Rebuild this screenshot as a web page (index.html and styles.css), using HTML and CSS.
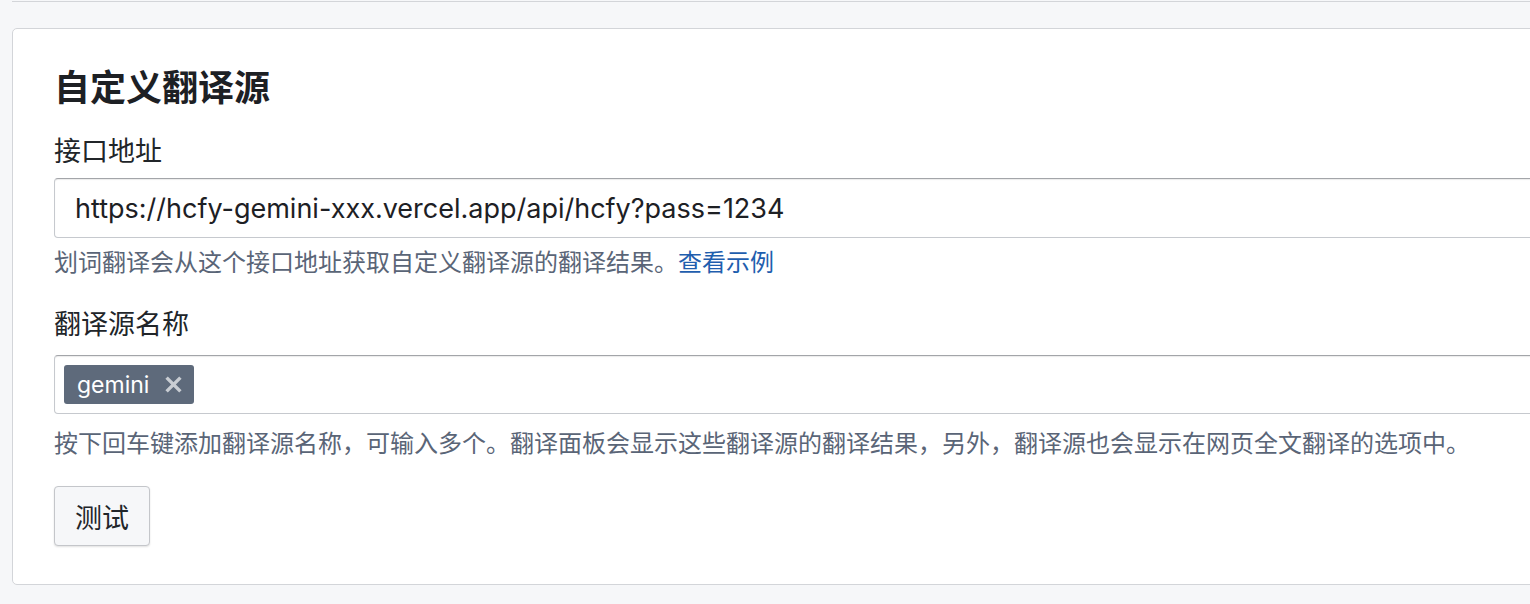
FILE: index.html
```html
<!DOCTYPE html>
<html lang="zh-CN">
<head>
<meta charset="utf-8">
<title>自定义翻译源</title>
<link rel="stylesheet" href="styles.css">
</head>
<body>
<div class="prev-card"></div>
<section class="card">
  <h2 class="title">自定义翻译源</h2>
  <div class="field">
    <label class="label">接口地址</label>
    <div class="input">https://hcfy-gemini-xxx.vercel.app/api/hcfy?pass=1234</div>
    <p class="help">划词翻译会从这个接口地址获取自定义翻译源的翻译结果。<a class="link" href="#">查看示例</a></p>
  </div>
  <div class="field field-2">
    <label class="label">翻译源名称</label>
    <div class="input tags">
      <span class="tag">gemini<svg class="tag-x" width="17" height="17" viewBox="0 0 17 17"><path d="M1.6 1.6 L15.4 15.4 M15.4 1.6 L1.6 15.4" stroke="currentColor" stroke-width="3.4" stroke-linecap="butt" fill="none"/></svg></span>
    </div>
    <p class="help help-2">按下回车键添加翻译源名称，可输入多个。翻译面板会显示这些翻译源的翻译结果，另外，翻译源也会显示在网页全文翻译的选项中。</p>
  </div>
  <button class="btn">测试</button>
</section>
</body>
</html>
```

FILE: styles.css
```css
html, body {
  margin: 0;
  padding: 0;
  overflow: hidden;
}
body {
  background: #f6f7f9;
  font-family: "Liberation Sans", "Noto Sans CJK SC", sans-serif;
  color: #212529;
  width: 1600px;
  height: 604px;
}
.prev-card {
  height: 1px;
  margin: 0 0 0 12px;
  border-bottom: 1px solid #d3d5d9;
}
.card {
  margin: 26px 0 0 12px;
  width: 1560px;
  background: #fff;
  border: 1px solid #d3d5d9;
  border-radius: 5px;
  padding: 38px 0 38px 41px;
  box-sizing: border-box;
}
.title {
  margin: 0;
  font-size: 36px;
  line-height: 43px;
  font-weight: 700;
  color: #1d2024;
}
.field {
  margin-top: 22px;
}
.field-2 {
  margin-top: 24px;
}
.label {
  display: block;
  font-size: 27px;
  line-height: 40px;
  color: #212529;
}
.input {
  margin-top: 6px;
  height: 60px;
  box-sizing: border-box;
  border: 1px solid #c6c9ce;
  border-top-color: #a3a5a9;
  border-radius: 4px;
  box-shadow: inset 0 1px 1px rgba(0,0,0,0.08);
  padding: 0 20px;
  font-family: "Inter", "Liberation Sans", "Noto Sans CJK SC", sans-serif;
  font-size: 27px;
  display: flex;
  align-items: center;
  color: #1d2024;
}
.field-2 .input {
  margin-top: 10px;
}
.tags {
  padding: 0 9px;
  height: 59px;
}
.tag {
  display: inline-flex;
  align-items: center;
  height: 39px;
  padding: 0 12px 0 13px;
  background: #5e6a7b;
  color: #fff;
  border-radius: 3px;
  font-size: 23px;
  gap: 16px;
}
.tag-x {
  display: block;
  color: #c9cdd3;
}
.help {
  margin: 7px 0 0;
  font-size: 24px;
  line-height: 36px;
  color: #5a6577;
}
.help-2 {
  margin-top: 12px;
}
.link {
  color: #1f5eae;
  text-decoration: none;
}
.btn {
  display: block;
  margin-top: 24px;
  height: 60px;
  width: 96px;
  padding: 0;
  background: #f6f7f9;
  border: 1px solid #c4c6ca;
  border-radius: 4px;
  box-shadow: 0 1px 2px rgba(0,0,0,0.12);
  font-family: inherit;
  font-size: 27px;
  color: #212529;
}
```
